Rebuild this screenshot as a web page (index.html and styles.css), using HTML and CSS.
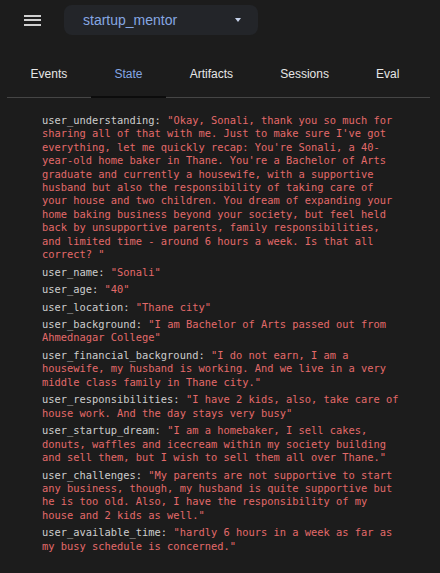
FILE: index.html
```html
<!DOCTYPE html>
<html lang="en">
<head>
    <meta charset="UTF-8">
    <meta name="viewport" content="width=device-width, initial-scale=1.0">
    <title>startup_mentor - State</title>
    <link rel="stylesheet" href="styles.css">
</head>
<body>
    <header class="top-bar">
        <button class="menu-button" aria-label="Menu">
            <span></span><span></span><span></span>
        </button>
        <div class="app-select">
            <span class="app-name">startup_mentor</span>
            <span class="caret"></span>
        </div>
    </header>

    <!-- Tabs -->
    <nav class="tabs">
        <div class="tab">Events</div>
        <div class="tab active">State</div>
        <div class="tab">Artifacts</div>
        <div class="tab">Sessions</div>
        <div class="tab">Eval</div>
    </nav>

    <!-- State listing -->
    <div class="state-list">
        <p class="state-item"><span class="key">user_understanding:</span> <span class="value">"Okay, Sonali, thank you so much for sharing all of that with me. Just to make sure I've got everything, let me quickly recap: You're Sonali, a 40-year-old home baker in Thane. You're a Bachelor of Arts graduate and currently a housewife, with a supportive husband but also the responsibility of taking care of your house and two children. You dream of expanding your home baking business beyond your society, but feel held back by unsupportive parents, family responsibilities, and limited time - around 6 hours a week. Is that all correct? "</span></p>
        <p class="state-item"><span class="key">user_name:</span> <span class="value">"Sonali"</span></p>
        <p class="state-item"><span class="key">user_age:</span> <span class="value">"40"</span></p>
        <p class="state-item"><span class="key">user_location:</span> <span class="value">"Thane city"</span></p>
        <p class="state-item"><span class="key">user_background:</span> <span class="value">"I am Bachelor of Arts passed out from Ahmednagar College"</span></p>
        <p class="state-item"><span class="key">user_financial_background:</span> <span class="value">"I do not earn, I am a housewife, my husband is working. And we live in a very middle class family in Thane city."</span></p>
        <p class="state-item"><span class="key">user_responsibilities:</span> <span class="value">"I have 2 kids, also, take care of house work. And the day stays very busy"</span></p>
        <p class="state-item"><span class="key">user_startup_dream:</span> <span class="value">"I am a homebaker, I sell cakes, donuts, waffles and icecream within my society building and sell them, but I wish to sell them all over Thane."</span></p>
        <p class="state-item"><span class="key">user_challenges:</span> <span class="value">"My parents are not supportive to start any business, though, my husband is quite supportive but he is too old. Also, I have the responsibility of my house and 2 kids as well."</span></p>
        <p class="state-item"><span class="key">user_available_time:</span> <span class="value">"hardly 6 hours in a week as far as my busy schedule is concerned."</span></p>
    </div>
</body>
</html>
```

FILE: styles.css
```css
body {
    font-family: "Liberation Sans", Arial, sans-serif;
    background-color: #1c1c1c;
    margin: 0;
    padding: 0;
}
.top-bar {
    display: flex;
    align-items: center;
    height: 40px;
    padding-left: 24px;
}
.menu-button {
    display: flex;
    flex-direction: column;
    gap: 2.5px;
    width: 17px;
    padding: 0;
    margin-right: 23px;
    border: none;
    background: none;
}
.menu-button span {
    display: block;
    height: 2px;
    background-color: #cfcfcf;
}
.app-select {
    display: flex;
    align-items: center;
    justify-content: space-between;
    width: 194px;
    height: 30px;
    box-sizing: border-box;
    padding: 0 17px 0 19px;
    background-color: #232529;
    border-radius: 8px;
}
.app-name {
    color: #86a7e2;
    font-size: 14px;
}
.caret {
    width: 0;
    height: 0;
    border-left: 3.5px solid transparent;
    border-right: 3.5px solid transparent;
    border-top: 4px solid #c6d2ea;
}
.tabs {
    display: flex;
    margin: 12px 10px 0 7px;
    border-bottom: 1px solid #454545;
}
.tab {
    padding: 0 23.6px;
    height: 44px;
    line-height: 44px;
    font-size: 12px;
    color: #e6e6e6;
    border-bottom: 2px solid transparent;
    margin-bottom: -1px;
}
.tab.active {
    color: #84a6e4;
    border-bottom-color: #0c0c0c;
}
.state-list {
    width: 360px;
    padding: 16px 0 0 42px;
    font-family: "DejaVu Sans Mono", "Liberation Mono", monospace;
    font-size: 10.4px;
    line-height: 13.4px;
}
.state-item {
    margin: 0 0 4.1px;
}
.key {
    color: #cdcdcd;
}
.value {
    color: #e36a6a;
}
```
